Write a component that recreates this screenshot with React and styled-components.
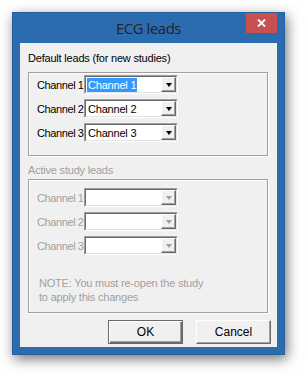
import React from "react";
import styled, { createGlobalStyle } from "styled-components";

const GlobalStyle = createGlobalStyle`
  html, body {
    margin: 0;
    padding: 0;
    background: #ffffff;
  }
  body {
    font-family: "Liberation Sans", Arial, sans-serif;
    font-size: 11px;
  }
`;

const Page = styled.div`
  width: 305px;
  height: 375px;
  padding: 12px 0 0 12px;
  box-sizing: border-box;
`;

const Window = styled.div`
  width: 273px;
  height: 343px;
  box-sizing: border-box;
  background: #2b6cb1;
  border: 1px solid #24609f;
  padding: 0 7px 7px 7px;
  box-shadow: 2px 4px 12px rgba(0, 0, 0, 0.55);
  display: flex;
  flex-direction: column;
`;

const TitleBar = styled.div`
  height: 30px;
  display: grid;
  grid-template-columns: 31px 1fr 31px;
  align-items: start;
`;

const Title = styled.div`
  grid-column: 2;
  text-align: center;
  font-family: "Open Sans", "Noto Sans", sans-serif;
  font-size: 15px;
  letter-spacing: -0.5px;
  color: #222;
  line-height: 20px;
  margin-top: 5px;
`;

const CloseButton = styled.div`
  grid-column: 3;
  width: 31px;
  height: 20px;
  background: #c75050;
  display: flex;
  align-items: center;
  justify-content: center;
`;

const Client = styled.div`
  flex: 1;
  background: #f0f0f0;
  display: flex;
  flex-direction: column;
  padding: 0 9px 0 8px;
  overflow: hidden;
`;

const GroupLabel = styled.div`
  line-height: 13px;
  height: 13px;
  letter-spacing: -0.2px;
  color: ${(p) => (p.disabled ? "#a0a0a0" : "#000")};
  margin-top: ${(p) => p.top}px;
  margin-bottom: ${(p) => p.bottom}px;
  white-space: nowrap;
`;

const GroupBox = styled.div`
  border: 1px solid #a0a0a0;
  box-shadow: inset 1px 1px 0 #fff, 1px 1px 0 #fff;
  padding: ${(p) => p.pad};
  display: flex;
  flex-direction: column;
  gap: 5px;
`;

const Row = styled.div`
  display: flex;
  align-items: center;
  height: 19px;
`;

const RowLabel = styled.div`
  width: 47px;
  white-space: nowrap;
  letter-spacing: -0.4px;
  color: ${(p) => (p.disabled ? "#a0a0a0" : "#000")};
`;

const Combo = styled.div`
  width: 94px;
  height: 19px;
  box-sizing: border-box;
  background: #fff;
  border-top: 1px solid #a0a0a0;
  border-left: 1px solid #a0a0a0;
  border-right: 1px solid #fff;
  border-bottom: 1px solid #fff;
  display: flex;
`;

const ComboInner = styled.div`
  flex: 1;
  display: flex;
  border-top: 1px solid #696969;
  border-left: 1px solid #696969;
  border-right: 1px solid #e3e3e3;
  border-bottom: 1px solid #e3e3e3;
`;

const ComboText = styled.div`
  flex: 1;
  display: flex;
  align-items: center;
  padding-left: 1px;
`;

const ComboValue = styled.span`
  line-height: 14px;
  padding: 0 1px 0 1px;
  letter-spacing: -0.2px;
  color: ${(p) => (p.selected ? "#fff" : "#000")};
  background: ${(p) => (p.selected ? "#3399ff" : "transparent")};
`;

const DropButton = styled.div`
  width: 15px;
  box-sizing: border-box;
  background: #f0f0f0;
  border-top: 1px solid #fff;
  border-left: 1px solid #fff;
  border-right: 1px solid #696969;
  border-bottom: 1px solid #696969;
  box-shadow: inset -1px -1px 0 #a0a0a0;
  display: flex;
  align-items: center;
  justify-content: center;
`;

const Arrow = styled.div`
  width: 0;
  height: 0;
  border-left: 3.5px solid transparent;
  border-right: 3.5px solid transparent;
  border-top: 4px solid ${(p) => (p.disabled ? "#a0a0a0" : "#000")};
  margin: 1px 0 0 0;
`;

const Note = styled.div`
  margin: 16px 0 0 2px;
  line-height: 14px;
  color: #a0a0a0;
  letter-spacing: -0.2px;
`;

const ButtonRow = styled.div`
  display: flex;
  justify-content: flex-end;
  gap: 13px;
  margin: 7px -3px 0 0;
`;

const Button = styled.div`
  width: 75px;
  height: 24px;
  box-sizing: border-box;
  background: #f0f0f0;
  border-top: 1px solid ${(p) => (p.primary ? "#696969" : "#fff")};
  border-left: 1px solid ${(p) => (p.primary ? "#696969" : "#fff")};
  border-right: 1px solid #696969;
  border-bottom: 1px solid #696969;
  box-shadow: ${(p) =>
    p.primary
      ? "inset 1px 1px 0 #fff, inset -1px -1px 0 #696969, inset -2px -2px 0 #a0a0a0"
      : "inset -1px -1px 0 #a0a0a0"};
  display: flex;
  align-items: center;
  justify-content: center;
  color: #000;
  font-size: 12px;
`;

function ChannelRow({ n, value, selected, disabled }) {
  return (
    <Row>
      <RowLabel disabled={disabled}>Channel {n}</RowLabel>
      <Combo>
        <ComboInner>
          <ComboText>
            {value && <ComboValue selected={selected}>{value}</ComboValue>}
          </ComboText>
          <DropButton>
            <Arrow disabled={disabled} />
          </DropButton>
        </ComboInner>
      </Combo>
    </Row>
  );
}

export default function App() {
  return (
    <>
      <GlobalStyle />
      <Page>
        <Window>
          <TitleBar>
            <Title>ECG leads</Title>
            <CloseButton>
              <svg width="9" height="8" viewBox="0 0 9 8">
                <path d="M1 0.5 L8 7.5 M8 0.5 L1 7.5" stroke="#fff" strokeWidth="1.8" />
              </svg>
            </CloseButton>
          </TitleBar>
          <Client>
            <GroupLabel top={9} bottom={7}>
              Default leads (for new studies)
            </GroupLabel>
            <GroupBox pad="2px 0 13px 8px">
              <ChannelRow n={1} value="Channel 1" selected />
              <ChannelRow n={2} value="Channel 2" />
              <ChannelRow n={3} value="Channel 3" />
            </GroupBox>
            <GroupLabel disabled top={8} bottom={2}>
              Active study leads
            </GroupLabel>
            <GroupBox pad="8px 0 8px 8px">
              <ChannelRow n={1} disabled />
              <ChannelRow n={2} disabled />
              <ChannelRow n={3} disabled />
              <Note>
                NOTE: You must re-open the study
                <br />
                to apply this changes
              </Note>
            </GroupBox>
            <ButtonRow>
              <Button primary>OK</Button>
              <Button>Cancel</Button>
            </ButtonRow>
          </Client>
        </Window>
      </Page>
    </>
  );
}
